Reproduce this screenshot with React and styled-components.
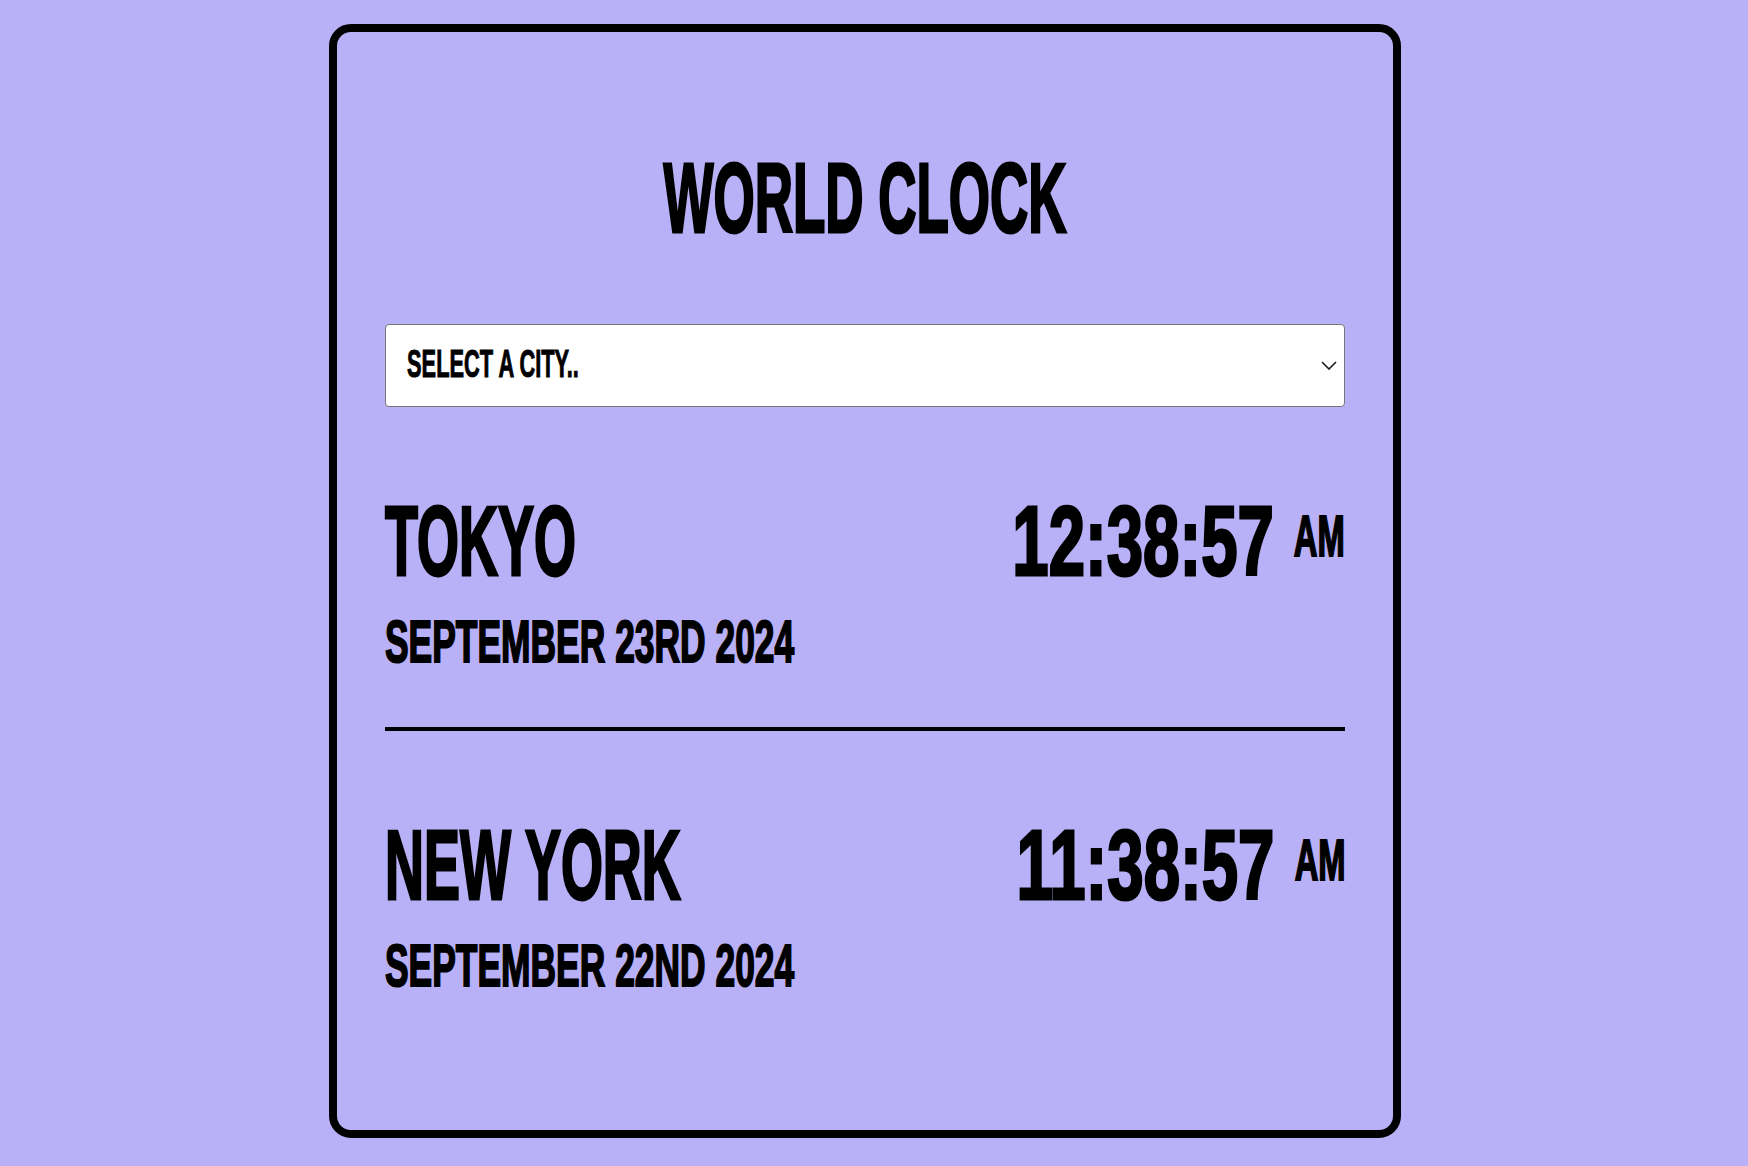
import styled, { createGlobalStyle } from "styled-components";
import * as Select from "@radix-ui/react-select";

const GlobalStyle = createGlobalStyle`
  body {
    margin: 0;
    background: #b9b1f7;
    color: #000;
    font-family: "Liberation Sans", Arial, sans-serif;
    font-weight: 700;
  }
`;

// the reference face is a tall condensed display font; squeeze a bold sans to get there
const squeeze = (x, origin = "left") => `
  transform: scaleX(${x});
  transform-origin: ${origin} center;
`;

const Page = styled.div`
  display: flex;
  justify-content: center;
  padding: 24px 18px 28px 0;
`;

const Card = styled.div`
  width: 1072px;
  box-sizing: border-box;
  border: 8px solid #000;
  border-radius: 22px;
  padding: 116px 48px 79px;
`;

const Title = styled.h1`
  margin: 0 0 77px;
  text-align: center;
  font-size: 99px;
  font-weight: 700;
  line-height: 1;
  white-space: nowrap;
  text-transform: uppercase;
  -webkit-text-stroke: 3px #000;
  ${squeeze(0.535, "center")}
`;

const Trigger = styled(Select.Trigger)`
  display: flex;
  align-items: center;
  justify-content: space-between;
  width: 100%;
  height: 83px;
  box-sizing: border-box;
  padding: 0 7px 0 21px;
  background: #fff;
  border: 1px solid #767676;
  border-radius: 4px;
  color: #000;
  font: inherit;
  cursor: pointer;
`;

const Placeholder = styled.span`
  display: inline-block;
  margin-bottom: 4px;
  font-size: 39px;
  line-height: 1;
  white-space: nowrap;
  text-transform: uppercase;
  -webkit-text-stroke: 1px #000;
  ${squeeze(0.56)}
`;

const Chevron = styled.svg`
  width: 16px;
  height: 9px;
  flex-shrink: 0;
`;

const Menu = styled(Select.Content)`
  width: var(--radix-select-trigger-width);
  background: #fff;
  border: 1px solid #767676;
  border-radius: 4px;
  font-family: "Liberation Sans", Arial, sans-serif;
`;

const MenuItem = styled(Select.Item)`
  padding: 8px 21px;
  font-size: 24px;
  font-weight: 700;
  text-transform: uppercase;
  outline: none;

  &[data-highlighted] {
    background: #ece9ff;
  }
`;

const CityRow = styled.div`
  padding: 84px 0 55px;
  border-bottom: 4px solid #000;

  &:last-child {
    border-bottom: none;
  }
`;

const TopLine = styled.div`
  display: flex;
  justify-content: space-between;
  align-items: center;
`;

const CityName = styled.h2`
  flex: 1;
  min-width: 0;
  margin: 0;
  font-size: 99px;
  font-weight: 700;
  line-height: 1;
  white-space: nowrap;
  text-transform: uppercase;
  -webkit-text-stroke: 3px #000;
  ${squeeze(0.545)}
`;

const Time = styled.div`
  display: flex;
  flex-shrink: 0;
  align-items: center;
  gap: 19px;
  font-size: 99px;
  line-height: 1;
  white-space: nowrap;
  -webkit-text-stroke: 3px #000;
  ${squeeze(0.66, "right")}
`;

const Period = styled.span`
  display: inline-block;
  margin-bottom: 8px;
  font-size: 57px;
  -webkit-text-stroke: 2px #000;
  ${squeeze(0.87, "right")}
`;

const DateText = styled.div`
  margin-top: 23px;
  font-size: 59px;
  line-height: 1;
  white-space: nowrap;
  text-transform: uppercase;
  -webkit-text-stroke: 2px #000;
  ${squeeze(0.6)}
`;

const cities = [
  { name: "Tokyo", time: "12:38:57", period: "AM", date: "September 23rd 2024" },
  { name: "New York", time: "11:38:57", period: "AM", date: "September 22nd 2024" },
];

const App = () => {
  return (
    <Page>
      <GlobalStyle />
      <Card>
        <Title>World Clock</Title>

        <Select.Root>
          <Trigger aria-label="City">
            <Select.Value placeholder={<Placeholder>Select a city..</Placeholder>} />
            <Select.Icon asChild>
              <Chevron viewBox="0 0 16 9" fill="none">
                <path d="M1 1l7 7 7-7" stroke="#1a1a1a" strokeWidth="1.6" />
              </Chevron>
            </Select.Icon>
          </Trigger>
          <Select.Portal>
            <Menu position="popper" sideOffset={4}>
              <Select.Viewport>
                {cities.map((city) => (
                  <MenuItem key={city.name} value={city.name}>
                    <Select.ItemText>{city.name}</Select.ItemText>
                  </MenuItem>
                ))}
              </Select.Viewport>
            </Menu>
          </Select.Portal>
        </Select.Root>

        <div>
          {cities.map((city) => (
            <CityRow key={city.name}>
              <TopLine>
                <CityName>{city.name}</CityName>
                <Time>
                  <span>{city.time}</span>
                  <Period>{city.period}</Period>
                </Time>
              </TopLine>
              <DateText>{city.date}</DateText>
            </CityRow>
          ))}
        </div>
      </Card>
    </Page>
  );
};

export default App;
